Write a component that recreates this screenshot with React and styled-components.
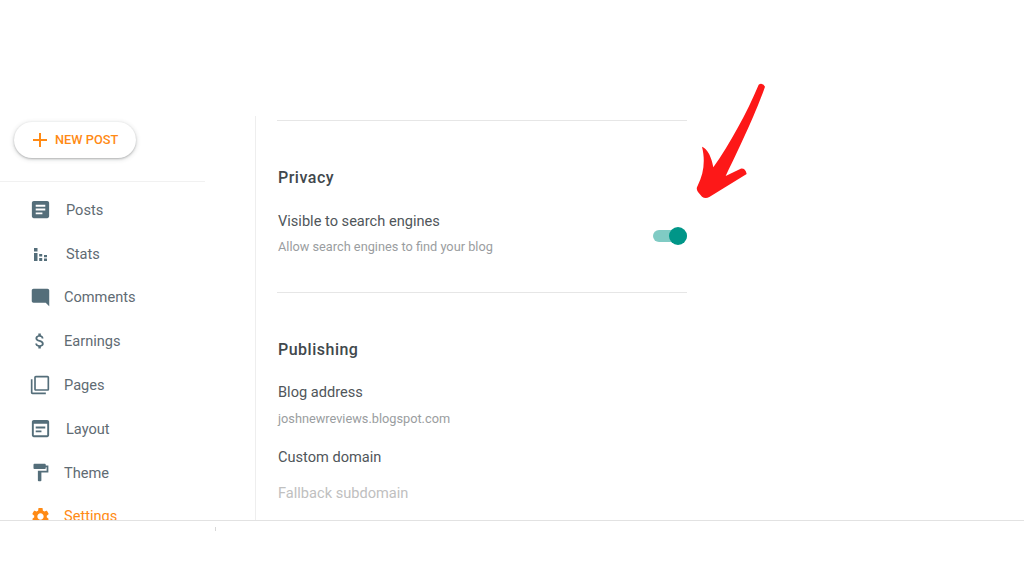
import styled, { createGlobalStyle } from "styled-components";

const GlobalStyle = createGlobalStyle`
  html, body { margin: 0; padding: 0; background: #fff; }
  body { font-family: Roboto, "Liberation Sans", sans-serif; overflow: hidden; }
`;

const Page = styled.div`
  position: relative;
  width: 1024px;
  height: 576px;
  display: flex;
  flex-direction: column;
  background: #fff;
`;

const Main = styled.div`
  display: flex;
  margin-top: 116px;
  height: 404px;
  overflow: hidden;
`;

const Sidebar = styled.aside`
  flex: 0 0 256px;
  box-sizing: border-box;
  padding-top: 6px;
  border-right: 1px solid #eeeeee;
`;

const NewPost = styled.button`
  display: flex;
  align-items: center;
  box-sizing: border-box;
  width: 122px;
  height: 36px;
  margin-left: 14px;
  padding: 0 0 0 18px;
  gap: 7px;
  border: none;
  border-radius: 18px;
  background: #fff;
  box-shadow: 0 1px 2px rgba(60, 64, 67, 0.3), 0 1px 4px 1px rgba(60, 64, 67, 0.15);
  color: #ff8a14;
  font: 500 12.8px Roboto, sans-serif;
`;

const NewPostText = styled.span`
  margin-bottom: 2px;
`;

const SideRule = styled.div`
  width: 205px;
  height: 1px;
  margin: 23px 0 6px;
  background: #f1f1f1;
`;

const NavRow = styled.div`
  display: flex;
  align-items: center;
  height: 43.8px;
  padding-left: 28px;
  color: ${(p) => (p.$active ? "#ff8a14" : "#5f6b73")};
  font-size: 14.6px;
`;

const IconBox = styled.span`
  flex: 0 0 24px;
  display: flex;
  align-items: center;
  justify-content: center;
  height: 24px;
  color: ${(p) => (p.$active ? "#ff8a14" : "#546e7a")};
`;

const NavLabel = styled.span`
  margin-left: ${(p) => p.$gap}px;
`;

const Content = styled.section`
  width: 410px;
  margin-left: 21px;
  padding-top: 4px;
`;

const Rule = styled.div`
  height: 1px;
  background: #e6e6e6;
`;

const Group = styled.div`
  height: ${(p) => p.$height}px;
  padding: 47px 0 0 1px;
  box-sizing: border-box;
`;

const Heading = styled.h2`
  margin: 0;
  color: #41484c;
  font-size: 16px;
  font-weight: 500;
  line-height: 20px;
  letter-spacing: 0.5px;
`;

const SettingRow = styled.div`
  display: flex;
  align-items: center;
  justify-content: space-between;
`;

const Label = styled.div`
  margin-top: ${(p) => p.$top}px;
  color: #50565a;
  font-size: 14.6px;
  line-height: 20px;
`;

const Hint = styled.div`
  margin-top: ${(p) => p.$top}px;
  color: #9a9da0;
  font-size: 12.75px;
  line-height: 18px;
`;

const Faded = styled.div`
  margin-top: 16px;
  color: #c0c0c0;
  font-size: 14.6px;
  line-height: 20px;
`;

const Switch = styled.span`
  position: relative;
  display: block;
  width: 34px;
  height: 12px;
  margin-top: 27px;
  border-radius: 6px;
  background: #80cbc4;
`;

const Thumb = styled.span`
  position: absolute;
  top: -3px;
  right: 0;
  width: 18px;
  height: 18px;
  border-radius: 50%;
  background: #009688;
`;

const Footer = styled.footer`
  position: relative;
  height: 55px;
  border-top: 1px solid #e2e2e2;
`;

const Tick = styled.span`
  position: absolute;
  left: 215px;
  top: 6px;
  width: 1px;
  height: 4px;
  background: #d8d8d8;
`;

const Arrow = styled.svg`
  position: absolute;
  left: 630px;
  top: 70px;
`;

const icons = {
  posts: "M19 3H5c-1.1 0-2 .9-2 2v14c0 1.1.9 2 2 2h14c1.1 0 2-.9 2-2V5c0-1.1-.9-2-2-2zm-5 14H7v-2h7v2zm3-4H7v-2h10v2zm0-4H7V7h10v2z",
  stats: "M6 6h3.5v3.5H6zM6 11h3.5v8H6zM11.2 12h3v2.5h-3zM11.2 16h3v3h-3zM16 13h3v2.2h-3zM16 16.5h3V19h-3z",
  comments: "M21.99 4c0-1.1-.89-2-1.99-2H4c-1.1 0-2 .9-2 2v12c0 1.1.9 2 2 2h14l4 4-.01-18z",
  earnings: "M11.8 10.9c-2.27-.59-3-1.2-3-2.15 0-1.09 1.01-1.85 2.7-1.85 1.78 0 2.44.85 2.5 2.1h2.21c-.07-1.72-1.12-3.3-3.21-3.81V3h-3v2.16c-1.94.42-3.5 1.68-3.5 3.61 0 2.31 1.91 3.46 4.7 4.13 2.5.6 3 1.48 3 2.41 0 .69-.49 1.79-2.7 1.79-2.06 0-2.87-.92-2.98-2.1h-2.2c.12 2.19 1.76 3.42 3.68 3.83V21h3v-2.15c1.95-.37 3.5-1.5 3.5-3.55 0-2.84-2.43-3.81-4.7-4.4z",
  pages: "M3 5H1v16c0 1.1.9 2 2 2h16v-2H3V5zm18-4H7c-1.1 0-2 .9-2 2v14c0 1.1.9 2 2 2h14c1.1 0 2-.9 2-2V3c0-1.1-.9-2-2-2zm0 16H7V3h14v14z",
  layout: "M19 3H5c-1.1 0-2 .9-2 2v14c0 1.1.9 2 2 2h14c1.1 0 2-.9 2-2V5c0-1.1-.9-2-2-2zm0 16H5V7h14v12zM7 10h10v2H7zM7 14h6v2H7z",
  theme: "M18 4V3c0-.55-.45-1-1-1H5c-.55 0-1 .45-1 1v4c0 .55.45 1 1 1h12c.55 0 1-.45 1-1V6h1v4H9v11c0 .55.45 1 1 1h2c.55 0 1-.45 1-1v-9h8V4h-3z",
  settings: "M19.14 12.94c.04-.3.06-.61.06-.94 0-.32-.02-.64-.07-.94l2.03-1.58c.18-.14.23-.41.12-.61l-1.92-3.32c-.12-.22-.37-.29-.59-.22l-2.39.96c-.5-.38-1.03-.7-1.62-.94l-.36-2.54c-.04-.24-.24-.41-.48-.41h-3.84c-.24 0-.43.17-.47.41l-.36 2.54c-.59.24-1.13.57-1.62.94l-2.39-.96c-.22-.08-.47 0-.59.22L2.74 8.87c-.12.21-.08.47.12.61l2.03 1.58c-.05.3-.09.63-.09.94s.02.64.07.94l-2.03 1.58c-.18.14-.23.41-.12.61l1.92 3.32c.12.22.37.29.59.22l2.39-.96c.5.38 1.03.7 1.62.94l.36 2.54c.05.24.24.41.48.41h3.84c.24 0 .44-.17.47-.41l.36-2.54c.59-.24 1.13-.56 1.62-.94l2.39.96c.22.08.47 0 .59-.22l1.92-3.32c.12-.22.07-.47-.12-.61l-2.01-1.58zM12 15.6c-1.98 0-3.6-1.62-3.6-3.6s1.62-3.6 3.6-3.6 3.6 1.62 3.6 3.6-1.62 3.6-3.6 3.6z",
};

const nav = [
  { id: "posts", label: "Posts", size: 23, gap: 14 },
  { id: "stats", label: "Stats", size: 24, gap: 14 },
  { id: "comments", label: "Comments", size: 21, gap: 12 },
  { id: "earnings", label: "Earnings", size: 20, gap: 12 },
  { id: "pages", label: "Pages", size: 20, gap: 12 },
  { id: "layout", label: "Layout", size: 23, gap: 14 },
  { id: "theme", label: "Theme", size: 21, gap: 12 },
  { id: "settings", label: "Settings", size: 21, gap: 12, active: true },
];

function NavIcon({ id, size }) {
  return (
    <svg width={size} height={size} viewBox="0 0 24 24" fill="currentColor">
      <path d={icons[id]} />
    </svg>
  );
}

export default function App() {
  return (
    <Page>
      <GlobalStyle />
      <Main>
        <Sidebar>
          <NewPost>
            <svg width="16" height="16" viewBox="0 0 16 16" fill="#ff8a14">
              <path d="M7 1h2v6h6v2H9v6H7V9H1V7h6z" />
            </svg>
            <NewPostText>NEW POST</NewPostText>
          </NewPost>
          <SideRule />
          {nav.map((item) => (
            <NavRow key={item.id} $active={item.active}>
              <IconBox $active={item.active}>
                <NavIcon id={item.id} size={item.size} />
              </IconBox>
              <NavLabel $gap={item.gap}>{item.label}</NavLabel>
            </NavRow>
          ))}
        </Sidebar>
        <Content>
          <Rule />
          <Group $height={171}>
            <Heading>Privacy</Heading>
            <SettingRow>
              <div>
                <Label $top={23}>Visible to search engines</Label>
                <Hint $top={7}>Allow search engines to find your blog</Hint>
              </div>
              <Switch>
                <Thumb />
              </Switch>
            </SettingRow>
          </Group>
          <Rule />
          <Group $height={230}>
            <Heading>Publishing</Heading>
            <Label $top={22}>Blog address</Label>
            <Hint $top={8}>joshnewreviews.blogspot.com</Hint>
            <Label $top={19}>Custom domain</Label>
            <Faded>Fallback subdomain</Faded>
          </Group>
        </Content>
      </Main>
      <Footer>
        <Tick />
      </Footer>
      <Arrow width="150" height="190" viewBox="0 0 450 570">
        <path
          d="M386 44 Q396 36 405 50 C385 110 340 210 287 318 L332 296 Q346 294 350 312 L238 381 Q226 388 216 380 L204 366 Q197 356 203 347 C222 310 226 270 216 230 Q240 240 250 292 C300 220 350 130 386 44 Z"
          fill="#fd1818"
        />
      </Arrow>
    </Page>
  );
}
